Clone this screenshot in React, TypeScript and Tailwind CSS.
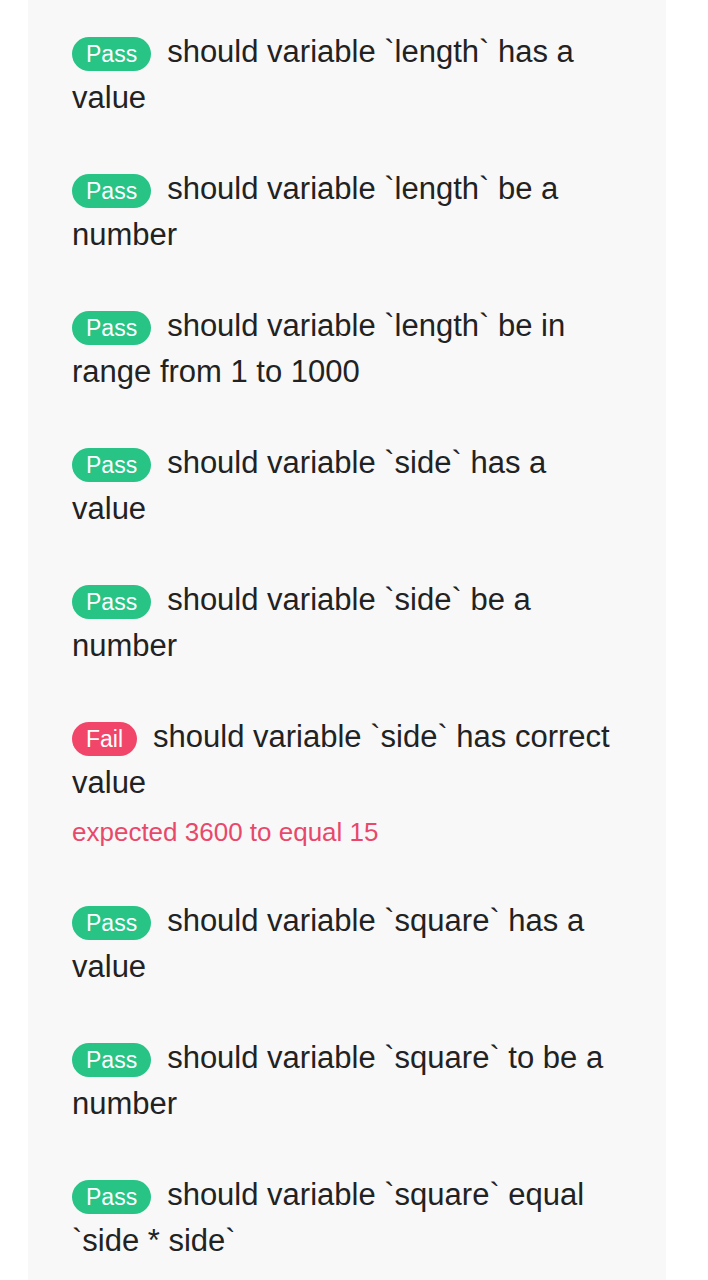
type TestResult = {
    pass: boolean
    title: string
    error?: string
}

const results: TestResult[] = [
    { pass: true, title: "should variable `length` has a value" },
    { pass: true, title: "should variable `length` be a number" },
    { pass: true, title: "should variable `length` be in range from 1 to 1000" },
    { pass: true, title: "should variable `side` has a value" },
    { pass: true, title: "should variable `side` be a number" },
    { pass: false, title: "should variable `side` has correct value", error: "expected 3600 to equal 15" },
    { pass: true, title: "should variable `square` has a value" },
    { pass: true, title: "should variable `square` to be a number" },
    { pass: true, title: "should variable `square` equal `side * side`" },
]

function Badge(props: { pass: boolean }) {
    return (
        <span
            className={
                "inline-block align-baseline mr-4 px-[14px] rounded-full text-white text-[23px] leading-[34px] " +
                (props.pass ? "bg-[#27c486]" : "bg-[#f2456a]")
            }
        >
            {props.pass ? "Pass" : "Fail"}
        </span>
    )
}

export default function App() {
    return (
        <div className="min-h-[1280px] bg-white" style={{ fontFamily: '"Liberation Sans", Arial, sans-serif' }}>
            <div className="ml-[28px] w-[638px] min-h-[1280px] bg-[#f8f8f8] pl-[44px] pr-[40px] pt-[29px]">
                {results.map((r, index) => (
                    <div key={index} className="mb-[45px]">
                        <div className="text-[31px] leading-[46px] text-[#222222]">
                            <Badge pass={r.pass} />
                            {r.title}
                        </div>
                        {r.error && (
                            <div className="mt-[6px] text-[26px] leading-[41px] text-[#e8486a]">{r.error}</div>
                        )}
                    </div>
                ))}
            </div>
        </div>
    )
}
